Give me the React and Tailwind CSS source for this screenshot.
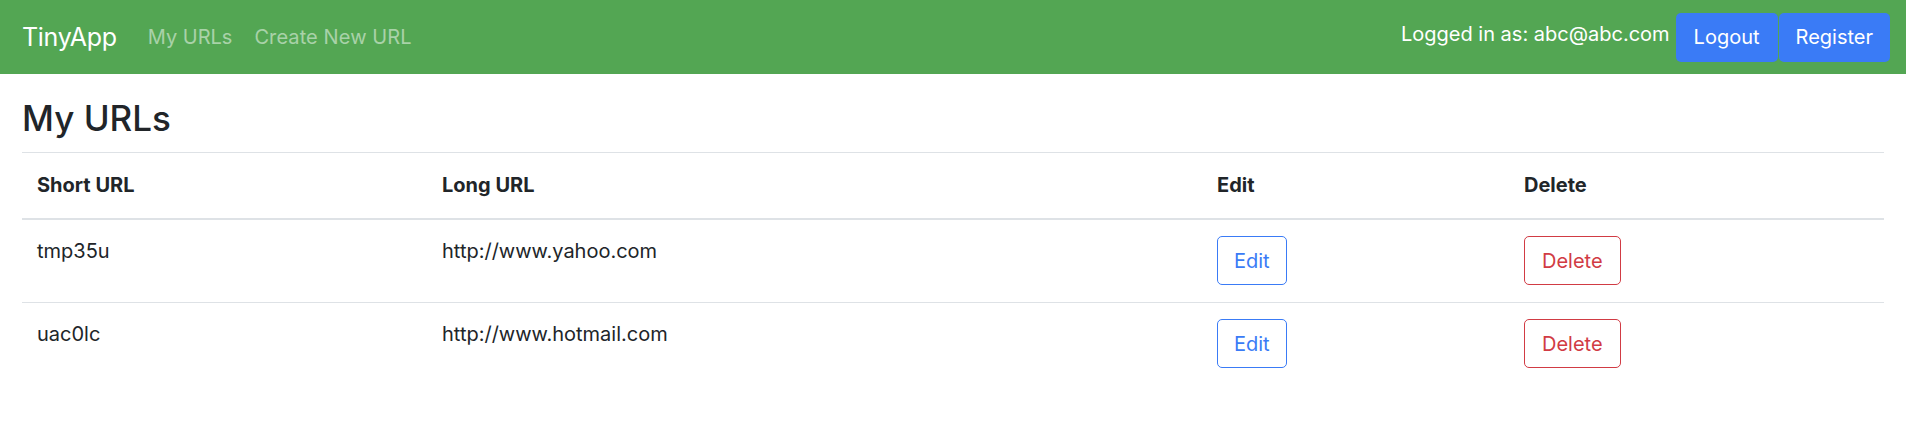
import React from "react";

const urls = [
  { id: "tmp35u", longURL: "http://www.yahoo.com" },
  { id: "uac0lc", longURL: "http://www.hotmail.com" },
];

export default function App() {
  return (
    <div className="min-h-screen bg-white font-['Inter',sans-serif] text-[#212529] text-[20px] leading-[30px]">
      {/* Navbar */}
      <nav className="h-[74px] bg-[#53a653] flex items-center justify-between pl-[22px] pr-[16px]">
        <div className="flex items-center">
          <a href="#" className="text-white text-[25px] mr-[31px] tracking-[-0.3px]">TinyApp</a>
          <a href="#" className="text-white/50 mr-[22px]">My URLs</a>
          <a href="#" className="text-white/50 tracking-[0.1px]">Create New URL</a>
        </div>
        <div className="flex items-center">
          <span className="text-white mr-[6px] -mt-[6px]">Logged in as: abc@abc.com</span>
          <button className="bg-[#3a7bf6] text-white rounded-[5px] h-[49px] px-[18px]">Logout</button>
          <button className="bg-[#3a7bf6] text-white rounded-[5px] h-[49px] px-[17px] ml-[1px]">Register</button>
        </div>
      </nav>

      {/* Content */}
      <main className="px-[22px]">
        <h1 className="text-[35px] leading-[47px] font-medium mt-[21px] mb-[10px]">My URLs</h1>
        <table className="w-full border-collapse">
          <thead>
            <tr className="border-t border-[#dee2e6] border-b-2">
              <th className="w-[405px] text-left font-bold px-[15px] pt-[17px] pb-[18px] align-bottom">Short URL</th>
              <th className="w-[775px] text-left font-bold px-[15px] pt-[17px] pb-[18px] align-bottom">Long URL</th>
              <th className="w-[307px] text-left font-bold px-[15px] pt-[17px] pb-[18px] align-bottom">Edit</th>
              <th className="text-left font-bold px-[15px] pt-[17px] pb-[18px] align-bottom">Delete</th>
            </tr>
          </thead>
          <tbody>
            {urls.map((u) => (
              <tr key={u.id} className="border-t border-[#dee2e6] first:border-t-0">
                <td className="px-[15px] pt-[16px] pb-[17px] align-top">{u.id}</td>
                <td className="px-[15px] pt-[16px] pb-[17px] align-top">{u.longURL}</td>
                <td className="px-[15px] pt-[16px] pb-[17px] align-top">
                  <button className="border border-[#3a7bf6] text-[#3a7bf6] rounded-[5px] px-[16px] h-[49px] flex items-center">Edit</button>
                </td>
                <td className="px-[15px] pt-[16px] pb-[17px] align-top">
                  <button className="border border-[#d13b44] text-[#d13b44] rounded-[5px] px-[17px] h-[49px] flex items-center">Delete</button>
                </td>
              </tr>
            ))}
          </tbody>
        </table>
      </main>
    </div>
  );
}
